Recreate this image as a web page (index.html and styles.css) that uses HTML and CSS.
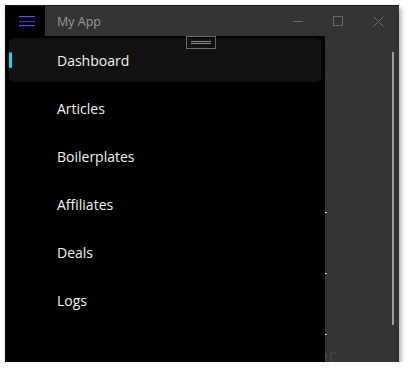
FILE: index.html
```html
<!DOCTYPE html>
<html>
<head>
<meta charset="utf-8">
<link rel="stylesheet" href="styles.css">
</head>
<body>
<div class="window">
  <div class="titlebar">
    <div class="hamburger">
      <svg width="16" height="11" viewBox="0 0 16 11"><rect x="0" y="0" width="16" height="1.2" fill="#6a45ff"/><rect x="0" y="5" width="16" height="1.2" fill="#4a2fb8"/><rect x="0" y="9" width="16" height="1.2" fill="#6a45ff"/></svg>
    </div>
    <div class="title">My App</div>
    <div class="controls">
      <div class="ctl"><svg width="10" height="10" viewBox="0 0 10 10"><line x1="0" y1="5.5" x2="10" y2="5.5" stroke="#6a6a6a" stroke-width="1"/></svg></div>
      <div class="ctl"><svg width="10" height="10" viewBox="0 0 10 10"><rect x="0.5" y="0.5" width="9" height="9" fill="none" stroke="#6a6a6a" stroke-width="1"/></svg></div>
      <div class="ctl"><svg width="11" height="11" viewBox="0 0 11 11"><path d="M0.5 0.5L10.5 10.5M10.5 0.5L0.5 10.5" stroke="#6a6a6a" stroke-width="1"/></svg></div>
    </div>
  </div>
  <div class="body">
    <nav class="pane">
      <div class="item active"><span class="indicator"></span>Dashboard</div>
      <div class="item">Articles</div>
      <div class="item">Boilerplates</div>
      <div class="item">Affiliates</div>
      <div class="item">Deals</div>
      <div class="item">Logs</div>
      <div class="grip"><span></span><span></span></div>
    </nav>
    <div class="content">
      <span class="tick t1"></span>
      <span class="tick t2"></span>
      <span class="tick t3"></span>
      <span class="ghost">er</span>
      <div class="scrollbar"></div>
    </div>
  </div>
</div>
</body>
</html>
```
FILE: styles.css
```css
html, body {
  margin: 0;
  padding: 0;
  background: #ffffff;
}
body {
  padding: 5px 0 0 5px;
  font-family: "Open Sans", "Noto Sans", sans-serif;
}
.window {
  width: 394px;
  height: 357px;
  background: #333333;
  box-shadow: 2px 3px 5px rgba(0,0,0,0.35);
  border-top: 1px solid #1c1c1c;
  box-sizing: border-box;
  display: flex;
  flex-direction: column;
  overflow: hidden;
}
.titlebar {
  height: 30px;
  display: flex;
  align-items: center;
  flex: none;
}
.hamburger {
  width: 40px;
  height: 30px;
  background: #000;
  display: flex;
  align-items: center;
  justify-content: center;
  padding-left: 4px;
  box-sizing: border-box;
}
.hamburger svg { display: block; }
.title {
  margin-left: 12px;
  color: #9a9a9a;
  font-size: 12.5px;
  flex: 1;
}
.controls {
  display: flex;
  margin-right: 1px;
}
.ctl {
  width: 40px;
  height: 30px;
  display: flex;
  align-items: center;
  justify-content: center;
}
.ctl svg { display: block; }
.body {
  flex: 1;
  display: flex;
  position: relative;
}
.pane {
  width: 320px;
  background: #000;
  padding: 2px 4px 0 4px;
  box-sizing: border-box;
  position: relative;
  display: flex;
  flex-direction: column;
  gap: 4px;
  z-index: 1;
}
.item {
  height: 44px;
  display: flex;
  align-items: center;
  padding-left: 48px;
  color: #f2f2f2;
  font-size: 14px;
  border-radius: 5px;
  position: relative;
}
.item.active {
  background: #111111;
}
.indicator {
  position: absolute;
  left: 0;
  top: 14px;
  width: 3px;
  height: 16px;
  border-radius: 2px;
  background: #17d8ef;
}
.grip {
  position: absolute;
  left: 181px;
  top: 0;
  width: 28px;
  height: 11px;
  border: 1px solid #6c6c6c;
  display: flex;
  flex-direction: column;
  align-items: center;
  justify-content: center;
  gap: 1px;
}
.grip span {
  width: 20px;
  height: 1px;
  background: #8a8a8a;
}
.content {
  flex: 1;
  position: relative;
}
.tick {
  position: absolute;
  left: 0;
  width: 2px;
  height: 1px;
  background: #cfcfcf;
}
.t1 { top: 176px; }
.t2 { top: 237px; }
.t3 { top: 298px; }
.ghost {
  position: absolute;
  left: -8px;
  top: 306px;
  font-size: 20px;
  color: #444;
}
.scrollbar {
  position: absolute;
  left: 67px;
  top: 16px;
  width: 2px;
  height: 273px;
  background: #9a9a9a;
}
```
